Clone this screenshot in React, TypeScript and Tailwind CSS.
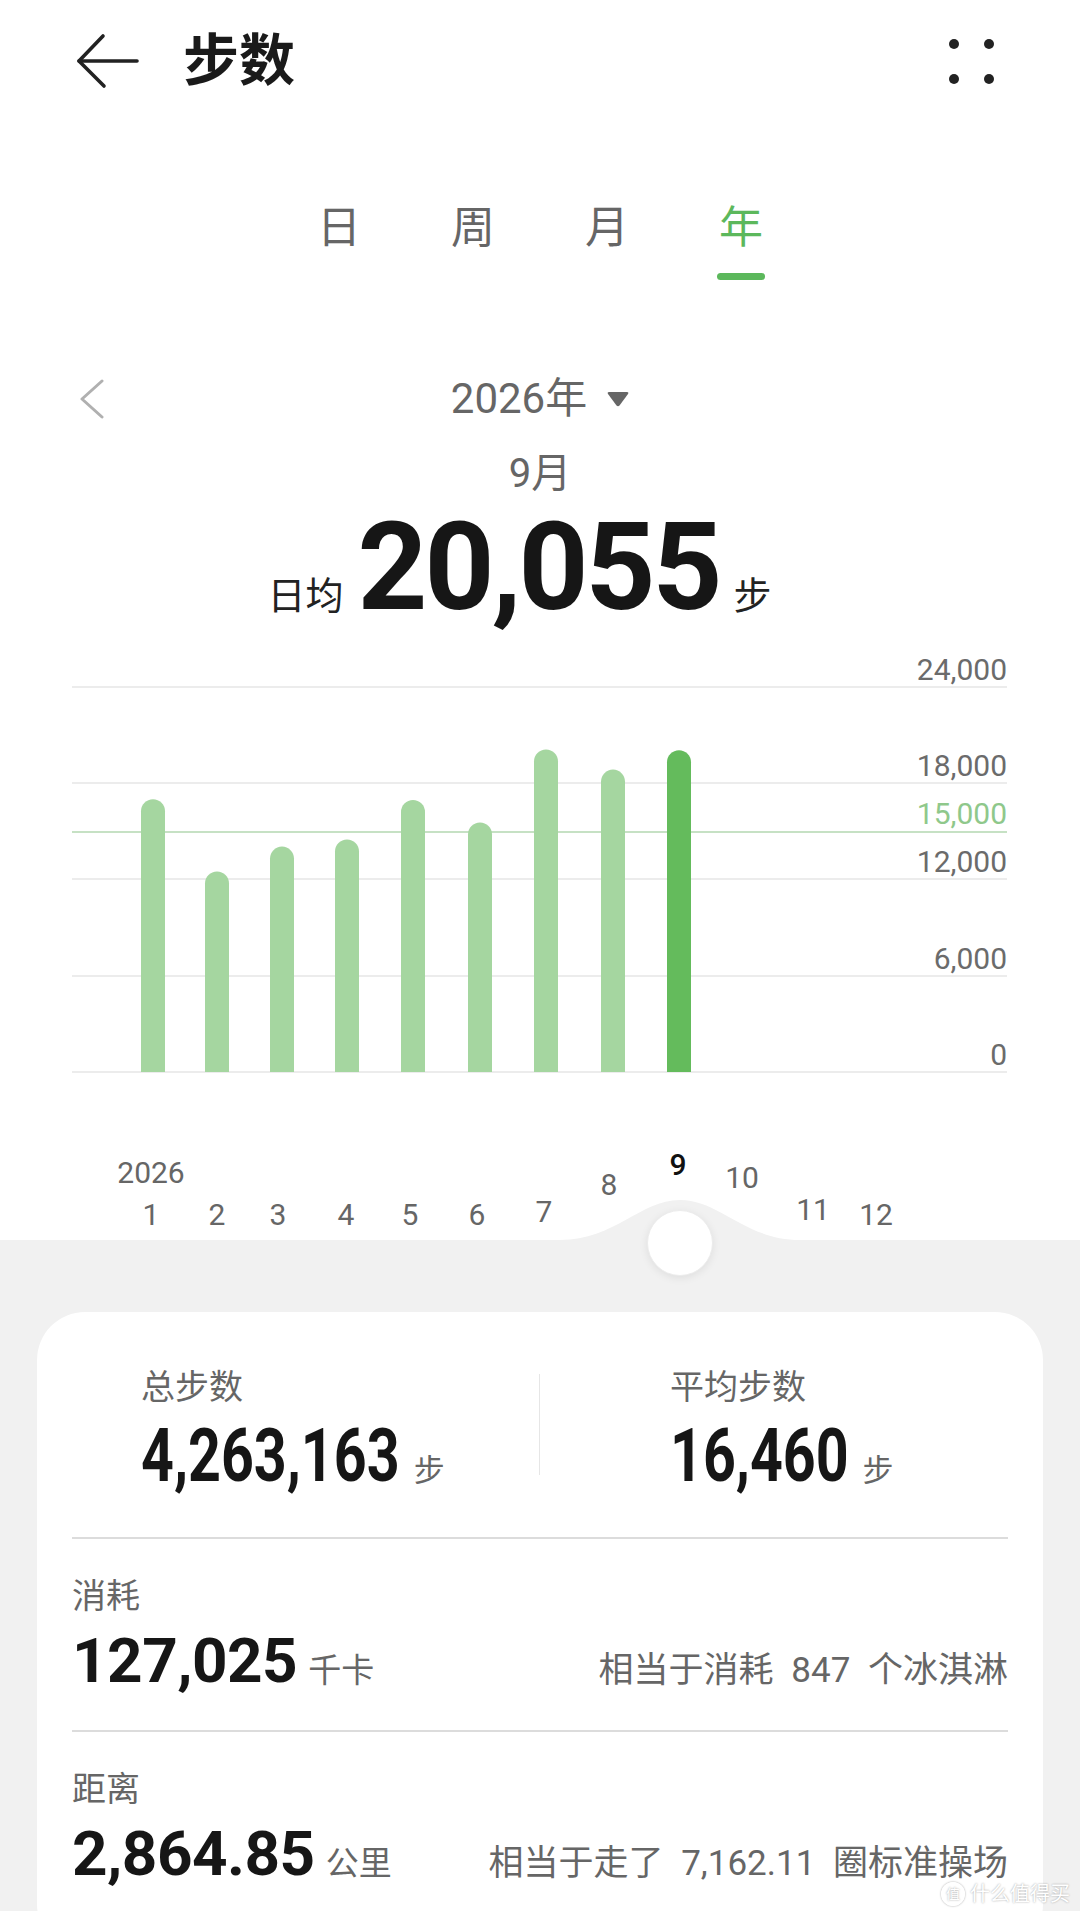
import React from "react";

// monthly daily-average steps, Jan..Sep
const months = [17000, 12500, 14050, 14500, 16950, 15550, 20100, 18850, 20055];
const barX = [153, 217, 282, 347, 413, 480, 546, 613, 679];
const selected = 8;

// chart geometry (svg local coords)
const BASE = 432;
const PX_PER_STEP = 385 / 24000;

const gridLines = [
  { y: 47, label: "24,000" },
  { y: 143, label: "18,000" },
  { y: 239, label: "12,000" },
  { y: 336, label: "6,000" },
  { y: 432, label: "0" },
];

const dial = [
  { t: "1", x: 151, y: 585 },
  { t: "2", x: 217, y: 585 },
  { t: "3", x: 278, y: 585 },
  { t: "4", x: 346, y: 585 },
  { t: "5", x: 410, y: 585 },
  { t: "6", x: 477, y: 585 },
  { t: "7", x: 544, y: 582 },
  { t: "8", x: 609, y: 555 },
  { t: "9", x: 678, y: 535 },
  { t: "10", x: 742, y: 548 },
  { t: "11", x: 813, y: 580 },
  { t: "12", x: 876, y: 585 },
];

const BackArrow = () => (
  <svg width="64" height="56" viewBox="0 0 64 56" fill="none" stroke="#222" strokeWidth="3.6" strokeLinecap="round" strokeLinejoin="round">
    <path d="M27 3 L3 28 L28 53" />
    <path d="M3 28 H61" />
  </svg>
);

const Chart = () => (
  <svg width="1080" height="600" viewBox="0 0 1080 600" className="mt-[11px] block shrink-0">
    <defs>
      <linearGradient id="sel" x1="0" y1="0" x2="0" y2="1">
        <stop offset="0" stopColor="#cfe9cc" stopOpacity="0" />
        <stop offset="0.08" stopColor="#cfe9cc" stopOpacity="1" />
        <stop offset="0.85" stopColor="#cfe9cc" stopOpacity="1" />
        <stop offset="1" stopColor="#cfe9cc" stopOpacity="0" />
      </linearGradient>
    </defs>
    {gridLines.map((g) => (
      <g key={g.label}>
        <line x1="72" x2="1007" y1={g.y} y2={g.y} stroke="#ececec" strokeWidth="2" />
        <text x="1007" y={g.y - 7} textAnchor="end" fontFamily="Roboto" fontSize="30" fill="#6b6b6b">
          {g.label}
        </text>
      </g>
    ))}
    <line x1="72" x2="1007" y1="192" y2="192" stroke="#b3d7b0" strokeWidth="1.6" />
    <text x="1007" y="184" textAnchor="end" fontFamily="Roboto" fontSize="30" fill="#8fc88b">
      15,000
    </text>
    <line x1="679" x2="679" y1="52" y2="498" stroke="url(#sel)" strokeWidth="1.5" />
    {months.map((v, i) => {
      const top = BASE - v * PX_PER_STEP;
      const x = barX[i];
      return (
        <path
          key={i}
          d={`M${x - 12} ${BASE} V${top + 12} A12 12 0 0 1 ${x + 12} ${top + 12} V${BASE} Z`}
          fill={i === selected ? "#64bb5c" : "#a5d6a0"}
        />
      );
    })}
    <text x="151" y="543" textAnchor="middle" fontFamily="Roboto" fontSize="30" fill="#666">
      2026
    </text>
    {dial.map((d) => (
      <text
        key={d.t}
        x={d.x}
        y={d.y}
        textAnchor="middle"
        fontFamily="Roboto"
        fontSize="30"
        fontWeight={d.t === "9" ? 500 : 400}
        fill={d.t === "9" ? "#111" : "#666"}
      >
        {d.t}
      </text>
    ))}
    <path d="M560 600 C615 600 640 560 680 560 C720 560 745 600 800 600 Z" fill="#f1f1f1" />
  </svg>
);

// the app uses a condensed numeral face; squeeze Roboto to match
const Stat = ({ label, value, pull }: { label: string; value: string; pull: string }) => (
  <div>
    <div className="text-[34px] leading-none text-[#666]">{label}</div>
    <div className="mt-[15px] flex items-baseline leading-none">
      <span className={`inline-block origin-left scale-x-[0.775] text-[74px] font-bold text-[#161616] ${pull}`}>
        {value}
      </span>
      <span className="ml-[13px] text-[31px] text-[#666]">步</span>
    </div>
  </div>
);

const Metric = ({ label, value, unit, note }: { label: string; value: string; unit: string; note: string }) => (
  <div className="h-[193px] border-b-2 border-[#dcdcdc] pt-[40px] last:border-b-0">
    <div className="text-[34px] leading-none text-[#666]">{label}</div>
    <div className="mt-[17px] flex items-baseline justify-between leading-none">
      <div className="flex items-baseline">
        <span className="text-[62px] font-bold tracking-[-0.5px] text-[#161616]">{value}</span>
        <span className="ml-[11px] text-[33px] text-[#666]">{unit}</span>
      </div>
      <span className="text-[35px] text-[#666] [word-spacing:9px]">{note}</span>
    </div>
  </div>
);

export default function App() {
  return (
    <div className="relative flex h-[1911px] w-[1080px] flex-col overflow-hidden bg-white [font-family:Roboto,'Noto_Sans_CJK_SC',sans-serif]">
      {/* top bar */}
      <header className="flex h-[122px] shrink-0 items-center pl-[76px] pr-[86px]">
        <BackArrow />
        <h1 className="ml-[43px] text-[56px] font-bold leading-none text-[#1a1a1a]">步数</h1>
        <div className="ml-auto grid grid-cols-2 gap-[25px]">
          <span className="h-[10px] w-[10px] rounded-full bg-[#222]" />
          <span className="h-[10px] w-[10px] rounded-full bg-[#222]" />
          <span className="h-[10px] w-[10px] rounded-full bg-[#222]" />
          <span className="h-[10px] w-[10px] rounded-full bg-[#222]" />
        </div>
      </header>

      {/* period tabs */}
      <nav className="mt-[84px] flex shrink-0 justify-center">
        {["日", "周", "月", "年"].map((t) => (
          <div key={t} className="flex w-[134px] flex-col items-center">
            <span className={`text-[44px] leading-none ${t === "年" ? "text-[#5cb85c]" : "text-[#666]"}`}>{t}</span>
            <span className={`mt-[23px] h-[7px] w-[48px] rounded-full ${t === "年" ? "bg-[#5cb85c]" : "bg-transparent"}`} />
          </div>
        ))}
      </nav>

      {/* year switcher */}
      <div className="mt-[98px] grid h-[42px] shrink-0 grid-cols-[1fr_auto_1fr] items-center">
        <div className="pl-[79px]">
          <svg width="26" height="40" viewBox="0 0 26 40" fill="none" stroke="#b0b0b0" strokeWidth="3" strokeLinecap="round" strokeLinejoin="round">
            <path d="M23 2 L3 20 L23 38" />
          </svg>
        </div>
        <div className="flex items-center">
          <span className="text-[42px] leading-none text-[#666]">2026年</span>
          <svg width="22" height="16" viewBox="0 0 22 16" className="ml-[20px]">
            <path d="M2 1 H20 Q22 1 21 3 L12.5 14.5 Q11 16 9.5 14.5 L1 3 Q0 1 2 1 Z" fill="#666" />
          </svg>
        </div>
        <div />
      </div>

      <div className="mt-[34px] shrink-0 text-center text-[40px] leading-none text-[#666]">9月</div>

      <div className="mt-[13px] flex shrink-0 items-baseline justify-center pr-[41px] leading-none">
        <span className="text-[38px] text-[#222]">日均</span>
        <span className="ml-[14px] text-[122px] font-bold tracking-[-3px] text-[#161616]">20,055</span>
        <span className="ml-[14px] text-[38px] text-[#222]">步</span>
      </div>

      <Chart />

      {/* summary */}
      <section className="shrink-0 bg-[#f1f1f1] px-[37px] pt-[72px]">
        <div className="h-[640px] rounded-[48px] bg-white px-[35px] pt-[58px]">
          <div className="flex h-[169px] border-b-2 border-[#dcdcdc]">
            <div className="w-[467px] pl-[69px]">
              <Stat label="总步数" value="4,263,163" pull="-mr-[74px]" />
            </div>
            <div className="mt-[4px] h-[101px] w-px bg-[#e6e6e6]" />
            <div className="pl-[130px]">
              <Stat label="平均步数" value="16,460" pull="-mr-[51px]" />
            </div>
          </div>
          <Metric label="消耗" value="127,025" unit="千卡" note="相当于消耗 847 个冰淇淋" />
          <Metric label="距离" value="2,864.85" unit="公里" note="相当于走了 7,162.11 圈标准操场" />
        </div>
      </section>

      {/* dial knob */}
      <div className="absolute left-[647px] top-[1210px] h-[66px] w-[66px] rounded-full border border-[#ececec] bg-white shadow-[0_2px_8px_rgba(0,0,0,0.08)]" />

      {/* watermark */}
      <div className="absolute bottom-[5px] right-[10px] flex items-center gap-[5px] text-white [text-shadow:0_0_2px_#9a9a9a]">
        <span className="flex h-[24px] w-[24px] items-center justify-center rounded-full border-2 border-white text-[14px] leading-none shadow-[0_0_2px_#9a9a9a]">值</span>
        <span className="text-[20px] leading-none">什么值得买</span>
      </div>
    </div>
  );
}
